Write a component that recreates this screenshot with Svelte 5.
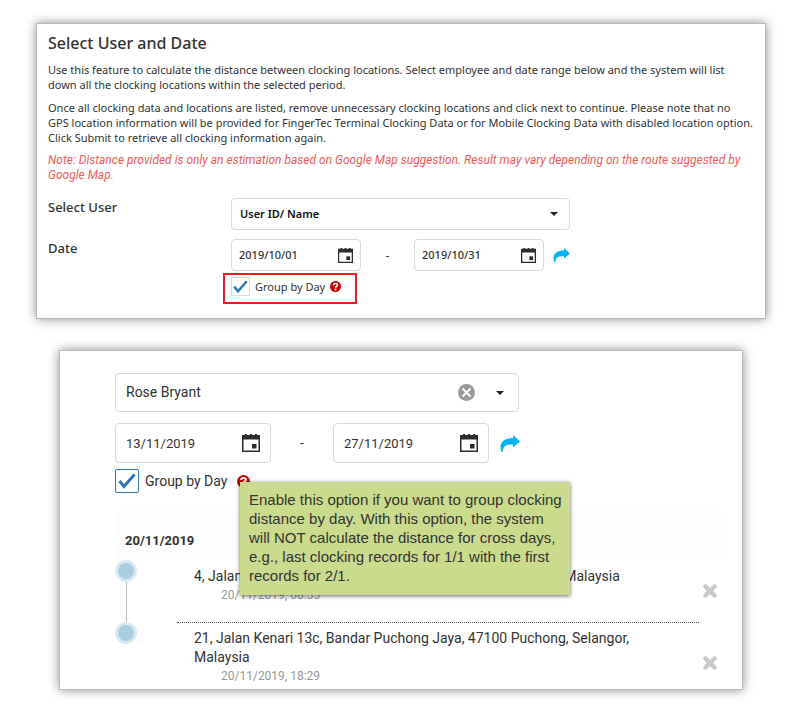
<script lang="ts">
  type Clocking = { address: string; time: string };

  let user = $state('');
  let from = $state('2019/10/01');
  let to = $state('2019/10/31');
  let groupByDay = $state(true);

  let employee = $state('Rose Bryant');
  let start = $state('13/11/2019');
  let end = $state('27/11/2019');
  let grouped = $state(true);

  let clockings: Clocking[] = $state([
    { address: '4, Jalan Kenari 19c, Bandar Puchong Jaya, 47100 Puchong, Malaysia', time: '20/11/2019, 08:55' },
    { address: '21, Jalan Kenari 13c, Bandar Puchong Jaya, 47100 Puchong, Selangor, Malaysia', time: '20/11/2019, 18:29' },
  ]);

  function remove(item: Clocking) {
    clockings = clockings.filter((c) => c !== item);
  }
</script>

{#snippet calendar()}
  <svg class="calendar" viewBox="0 0 18 18" aria-hidden="true">
    <path fill="#2d2d2d" fill-rule="evenodd" d="M0 1h3V0h2v1h3V0h2v1h3V0h2v1h3v17H0zM1.500 5.500v11h15v-11z" />
    <path fill="#2d2d2d" d="M10 10h4.500v4.500H10z" />
  </svg>
{/snippet}

{#snippet caret()}
  <svg class="caret" viewBox="0 0 8 4" aria-hidden="true"><path fill="#222" d="M0 0h8L4 4z" /></svg>
{/snippet}

{#snippet share()}
  <svg viewBox="0 0 20 17" aria-hidden="true">
    <path fill="#00b5f1" d="M13 0l7 6.500-7 6V9.800C7 9 3.500 10.500 2.500 17H1.500C-1.500 9 2.500 3 13 3z" />
  </svg>
{/snippet}

{#snippet help()}
  <svg viewBox="0 0 12 12" aria-hidden="true">
    <circle cx="6" cy="6" r="6" fill="#cc0000" />
    <path fill="none" stroke="#fff" stroke-width="1.8" d="M3.800 4.600C3.900 2.200 8.200 2.200 8.200 4.400C8.200 5.800 6 5.700 6 7.300" />
    <path fill="#fff" d="M5 8.300h2v1.900H5z" />
  </svg>
{/snippet}

{#snippet tick()}
  <svg class="tick" viewBox="0 0 18 16" aria-hidden="true">
    <path fill="none" stroke="#2e75b6" stroke-width="3" d="M1.500 8l4.500 5.500L16.500 1.500" />
  </svg>
{/snippet}

<main>
  <section class="panel intro">
    <h1>Select User and Date</h1>
    <p>
      Use this feature to calculate the distance between clocking locations. Select employee and date range below and the
      system will list<br />down all the clocking locations within the selected period.
    </p>
    <p>
      Once all clocking data and locations are listed, remove unnecessary clocking locations and click next to continue.
      Please note that no<br />GPS location information will be provided for FingerTec Terminal Clocking Data or for
      Mobile Clocking Data with disabled location option.<br />Click Submit to retrieve all clocking information again.
    </p>
    <p class="note">
      Note: Distance provided is only an estimation based on Google Map suggestion. Result may vary depending on the
      route suggested by<br />Google Map.
    </p>

    <div class="form">
      <label for="user">Select User</label>
      <div class="field user">
        <select id="user" bind:value={user}>
          <option value="">User ID/ Name</option>
        </select>
        {@render caret()}
      </div>

      <label for="from">Date</label>
      <div>
        <div class="range">
          <div class="field date">
            <input id="from" type="text" bind:value={from} />
            <button type="button" aria-label="Pick start date">{@render calendar()}</button>
          </div>
          <span class="dash">-</span>
          <div class="field date">
            <input type="text" aria-label="End date" bind:value={to} />
            <button type="button" aria-label="Pick end date">{@render calendar()}</button>
          </div>
          <button type="button" class="submit" aria-label="Submit">{@render share()}</button>
        </div>
        <div class="option highlight">
          <label class="check">
            <span class="box"><input type="checkbox" bind:checked={groupByDay} />{#if groupByDay}{@render tick()}{/if}</span>
            Group by Day
          </label>
          <button type="button" class="help" aria-label="Help">{@render help()}</button>
        </div>
      </div>
    </div>
  </section>

  <section class="panel result">
    <div class="field user">
      <select aria-label="Employee" bind:value={employee}>
        <option>Rose Bryant</option>
        <option value=""></option>
      </select>
      <button type="button" class="clear" aria-label="Clear" onclick={() => (employee = '')}>
        <svg viewBox="0 0 17 17" aria-hidden="true">
          <circle cx="8.5" cy="8.500" r="8.500" fill="#999" />
          <path stroke="#fff" stroke-width="2" d="M4.500 4.500l8 8m0-8l-8 8" />
        </svg>
      </button>
      {@render caret()}
    </div>

    <div class="range">
      <div class="field date">
        <input type="text" aria-label="Start date" bind:value={start} />
        <button type="button" aria-label="Pick start date">{@render calendar()}</button>
      </div>
      <span class="dash">-</span>
      <div class="field date">
        <input type="text" aria-label="End date" bind:value={end} />
        <button type="button" aria-label="Pick end date">{@render calendar()}</button>
      </div>
      <button type="button" class="submit" aria-label="Submit">{@render share()}</button>
    </div>

    <div class="option">
      <label class="check">
        <span class="box"><input type="checkbox" bind:checked={grouped} />{#if grouped}{@render tick()}{/if}</span>
        Group by Day
      </label>
      <button type="button" class="help" aria-label="Help" aria-describedby="tip">{@render help()}</button>
      <div class="tooltip" id="tip" role="tooltip">
        Enable this option if you want to group clocking distance by day. With this option, the system will NOT calculate
        the distance for cross days, e.g., last clocking records for 1/1 with the first records for 2/1.
      </div>
    </div>

    <h2>20/11/2019</h2>
    <ul>
      {#each clockings as item (item.time)}
        <li>
          <div class="marker"><span class="dot"></span><span class="line"></span></div>
          <div class="place">
            <div>{item.address}</div>
            <time>{item.time}</time>
          </div>
          <button type="button" aria-label="Remove" onclick={() => remove(item)}>
            <svg viewBox="0 0 14 14" aria-hidden="true">
              <path stroke="#c9c9c9" stroke-width="4.500" stroke-linecap="round" d="M2.500 2.500l9 9m0-9l-9 9" />
            </svg>
          </button>
        </li>
      {/each}
    </ul>
  </section>
</main>

<style>
  :global(body) {
    margin: 0;
    background: #fff;
  }
  main {
    padding: 23px 34px 20px 36px;
    color: #333;
  }
  .panel {
    box-sizing: border-box;
    border: 1px solid #b9b9b9;
    background: #fff;
    box-shadow: 0 0 10px rgba(0, 0, 0, 0.45);
  }
  .intro {
    padding: 7px 6px 14px 11px;
    font: 500 11px/15px 'Noto Sans', sans-serif;
  }
  h1 {
    margin: 0 0 7px;
    font-size: 16px;
    font-weight: 500;
    line-height: 24px;
  }
  p {
    margin: 0 0 8px;
    font-weight: 400;
  }
  .note {
    color: #f05a5a;
    font: italic 400 12px/15px Roboto, sans-serif;
  }
  .form {
    display: grid;
    grid-template-columns: 183px 1fr;
    row-gap: 9px;
    margin-top: 15px;
  }
  .form > label {
    font-size: 13px;
    line-height: 18px;
  }

  button {
    display: flex;
    padding: 0;
    border: 0;
    background: none;
    cursor: pointer;
  }
  .field {
    display: flex;
    align-items: center;
    box-sizing: border-box;
    border: 1px solid #d9d9d9;
    border-radius: 4px;
  }
  .field input,
  .field select {
    flex: 1;
    min-width: 0;
    padding: 0;
    border: 0;
    background: none;
    color: inherit;
    font: inherit;
    appearance: none;
    outline: none;
  }
  .caret {
    width: 8px;
    height: 4px;
  }
  .range {
    display: flex;
    align-items: center;
  }
  .dash {
    text-align: center;
  }
  .option {
    display: flex;
    align-items: center;
    position: relative;
  }
  .check {
    display: flex;
    align-items: center;
  }
  .box {
    display: grid;
    place-items: center;
    box-sizing: border-box;
  }
  .box input {
    grid-area: 1 / 1;
    width: 100%;
    height: 100%;
    margin: 0;
    appearance: none;
  }
  .tick {
    grid-area: 1 / 1;
    pointer-events: none;
  }

  .intro .field {
    height: 32px;
    padding: 0 11px 0 8px;
  }
  .intro .field input,
  .intro .field select {
    padding-bottom: 2px;
  }
  .intro .user {
    max-width: 339px;
    color: #111;
    font-weight: 600;
  }
  .intro .date {
    width: 130px;
    padding: 0 7px;
  }
  .intro .calendar {
    width: 15px;
    height: 15px;
  }
  .intro .dash {
    width: 53px;
  }
  .intro .submit {
    width: 17px;
    margin-left: 9px;
  }
  .highlight {
    width: 134px;
    height: 31px;
    box-sizing: border-box;
    margin: 2px 0 0 -8px;
    padding: 0 0 4px 6px;
    border: 2px solid #ed1c24;
    font-weight: 400;
  }
  .intro .check {
    gap: 5px;
  }
  .intro .box {
    width: 19px;
    height: 19px;
    border: 1px solid #d9d9d9;
  }
  .intro .tick {
    width: 15px;
  }
  .intro .help {
    width: 11px;
    margin-left: 5px;
  }

  .result {
    margin: 31px 23px 0;
    padding: 22px 21px 0 55px;
    overflow: hidden;
    font: 14px/19px Roboto, sans-serif;
  }
  .result .user {
    max-width: 404px;
    height: 39px;
    padding: 0 14px 0 10px;
  }
  .clear {
    width: 17px;
    margin-right: 21px;
  }
  .result .range {
    margin-top: 11px;
  }
  .result .date {
    width: 156px;
    height: 40px;
    padding: 0 10px;
    font-size: 13px;
  }
  .result .calendar {
    width: 18px;
    height: 18px;
  }
  .result .dash {
    width: 62px;
  }
  .result .submit {
    width: 20px;
    margin-left: 11px;
  }
  .result .option {
    margin-top: 6px;
  }
  .result .check {
    gap: 6px;
  }
  .result .box {
    width: 24px;
    height: 24px;
    border: 1px solid #2e75b6;
    border-radius: 2px;
  }
  .result .tick {
    width: 18px;
  }
  .result .help {
    width: 13px;
    margin-left: 10px;
  }
  .tooltip {
    position: absolute;
    top: 13px;
    left: 125px;
    width: 330px;
    box-sizing: border-box;
    padding: 8px 4px 10px 9px;
    background: #cadb8e;
    box-shadow: 0 1px 4px rgba(0, 0, 0, 0.6);
    font: 15px/19px 'Liberation Sans', Arial, sans-serif;
  }

  h2 {
    margin: 18px 0 0;
    padding: 20px 10px 10px;
    background: #fdfdfd;
    font-size: 13px;
    font-weight: 700;
    line-height: 19px;
  }
  /* the list runs on past the edge of the panel */
  ul {
    margin: 0 0 -14px;
    padding: 0;
    list-style: none;
  }
  li {
    display: grid;
    grid-template-columns: 22px 1fr 22px;
  }
  .marker {
    display: flex;
    flex-direction: column;
    align-items: center;
  }
  .dot {
    width: 16px;
    height: 16px;
    border: 3px solid #d9e8f1;
    border-radius: 50%;
    background: #a9cde1;
  }
  .line {
    flex: 1;
    width: 1px;
    background: #bbb;
  }
  li:last-child .line {
    display: none;
  }
  .place {
    margin-left: 40px;
    padding: 6px 40px 18px 17px;
    border-top: 1px dotted transparent;
  }
  li + li .place {
    border-top-color: #555;
  }
  time {
    display: block;
    padding-left: 27px;
    color: #999;
    font-size: 12px;
    line-height: 18px;
  }
  li button {
    align-items: center;
    justify-content: center;
  }
  li svg {
    width: 14px;
  }
</style>
